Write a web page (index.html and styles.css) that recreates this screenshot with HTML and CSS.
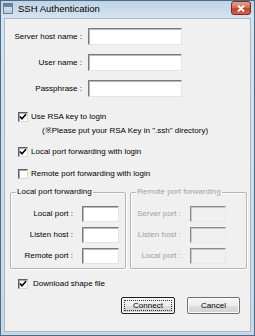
FILE: index.html
```html
<!DOCTYPE html>
<html>
<head>
<meta charset="utf-8">
<link rel="stylesheet" href="styles.css">
</head>
<body>
<div class="window">
  <div class="titlebar">
    <span class="app-icon"><span class="app-icon-bar"></span></span>
    <span class="title">SSH Authentication</span>
    <span class="close">
      <svg width="8" height="7" viewBox="0 0 8 7"><path d="M1 0.5 L7 6.5 M7 0.5 L1 6.5" stroke="#fff" stroke-width="1.8"/></svg>
    </span>
  </div>
  <div class="client">
    <div class="form">
      <span class="label">Server host name :</span><span class="input"></span>
      <span class="label">User name :</span><span class="input"></span>
      <span class="label">Passphrase :</span><span class="input"></span>
    </div>

    <div class="check-row rsa">
      <span class="cb"><svg width="8" height="8" viewBox="0 0 8 8"><path d="M1 3.5 L3 5.8 L7 1.2" fill="none" stroke="#000" stroke-width="1.6"/></svg></span>
      <span>Use RSA key to login</span>
    </div>
    <div class="note">(※Please put your RSA Key in ".ssh" directory)</div>
    <div class="check-row local">
      <span class="cb"><svg width="8" height="8" viewBox="0 0 8 8"><path d="M1 3.5 L3 5.8 L7 1.2" fill="none" stroke="#000" stroke-width="1.6"/></svg></span>
      <span>Local port forwarding with login</span>
    </div>
    <div class="check-row remote">
      <span class="cb"></span>
      <span>Remote port forwarding with login</span>
    </div>

    <div class="groups">
      <fieldset class="group group-local">
        <legend>Local port forwarding</legend>
        <div class="group-form">
          <span class="label">Local port :</span><span class="input small"></span>
          <span class="label">Listen host :</span><span class="input small"></span>
          <span class="label">Remote port :</span><span class="input small"></span>
        </div>
      </fieldset>
      <fieldset class="group group-remote disabled">
        <legend>Remote port forwarding</legend>
        <div class="group-form">
          <span class="label">Server port :</span><span class="input small"></span>
          <span class="label">Listen host :</span><span class="input small"></span>
          <span class="label">Local port :</span><span class="input small"></span>
        </div>
      </fieldset>
    </div>

    <div class="check-row download">
      <span class="cb"><svg width="8" height="8" viewBox="0 0 8 8"><path d="M1 3.5 L3 5.8 L7 1.2" fill="none" stroke="#000" stroke-width="1.6"/></svg></span>
      <span>Download shape file</span>
    </div>

    <div class="buttons">
      <span class="btn default"><span class="focus">Connect</span></span>
      <span class="btn">Cancel</span>
    </div>
  </div>
</div>
</body>
</html>
```

FILE: styles.css
```css
* { box-sizing: border-box; }
html, body { margin: 0; padding: 0; }
body {
  width: 255px;
  height: 336px;
  font-family: "Liberation Sans", Arial, sans-serif;
  font-size: 8px;
  color: #000;
  background: #c9d9ea;
}
.window {
  width: 255px;
  height: 336px;
  border: 1px solid #4d6c80;
  background: linear-gradient(to bottom, #bfd2e7 0px, #d6e3f1 17px, #c8d8ea 100%);
  display: flex;
  flex-direction: column;
}
.titlebar {
  height: 17px;
  display: flex;
  align-items: flex-start;
  padding-left: 2px;
  padding-right: 3px;
  flex-shrink: 0;
}
.app-icon {
  width: 10px;
  height: 11px;
  margin-top: 2px;
  border: 1px solid #6d7f8f;
  background: linear-gradient(to bottom, #e8eef4, #b8c6d4);
  display: flex;
  flex-direction: column;
}
.app-icon-bar {
  height: 3px;
  background: #5a86b4;
}
.title {
  margin-left: 5px;
  margin-top: 2px;
  font-size: 9.5px;
  line-height: 12px;
  color: #000;
}
.close {
  margin-left: auto;
  width: 20px;
  height: 14px;
  border: 1px solid #7a2b1f;
  border-radius: 3px;
  background: linear-gradient(to bottom, #e3a293 0%, #d0705c 45%, #c0452c 55%, #d3644a 100%);
  display: flex;
  align-items: center;
  justify-content: center;
}
.client {
  flex: 1;
  margin: 0 3px 3px 3px;
  background: #f0f0f0;
  border: 1px solid #a7b8c8;
  padding-top: 9px;
  display: flex;
  flex-direction: column;
}
.form {
  display: grid;
  grid-template-columns: 77px 94px;
  column-gap: 6px;
  grid-auto-rows: 17px;
  row-gap: 9px;
  align-items: center;
}
.label {
  text-align: right;
  line-height: 10px;
  white-space: nowrap;
}
.input {
  height: 17px;
  background: #fff;
  border-style: solid;
  border-width: 1px;
  border-color: #7a7a7a #e4e4e4 #e4e4e4 #7a7a7a;
  box-shadow: inset 1px 1px 0 #b9b9b9;
}
.input.small {
  height: 16px;
}
.check-row {
  display: flex;
  align-items: center;
  height: 12px;
  padding-left: 13px;
  gap: 3px;
  line-height: 10px;
  white-space: nowrap;
}
.cb {
  width: 10px;
  height: 10px;
  background: #fff;
  border-style: solid;
  border-width: 1px;
  border-color: #5e5e5e #d8d8d8 #d8d8d8 #5e5e5e;
  box-shadow: inset 1px 1px 0 #a9a9a9;
  display: flex;
  align-items: center;
  justify-content: center;
  flex-shrink: 0;
}
.rsa { margin-top: 14px; }
.note {
  margin-top: 2px;
  height: 12px;
  line-height: 12px;
  padding-left: 37px;
  white-space: nowrap;
}
.local { margin-top: 9px; }
.remote { margin-top: 10px; }
.groups {
  display: flex;
  gap: 4px;
  margin-top: 7px;
  padding-left: 5px;
}
.group {
  margin: 0;
  padding: 0 0 4px 0;
  border: 1px solid #b5b5b5;
  border-radius: 2px;
  box-shadow: inset 1px 1px 0 #fff, 1px 1px 0 #fff;
}
.group legend {
  margin-left: 5px;
  padding: 0 1px;
  line-height: 10px;
  font-size: 8px;
  white-space: nowrap;
}
.group-local { width: 116px; }
.group-remote { width: 117px; }
.group-form {
  display: grid;
  grid-auto-rows: 16px;
  row-gap: 5px;
  column-gap: 9px;
  align-items: center;
  padding-top: 9px;
}
.group-local .group-form { grid-template-columns: 62px 37px; }
.group-remote .group-form { grid-template-columns: 50px 36px; }
.disabled { color: #a0a0a0; }
.disabled .input {
  background: #f0f0f0;
  border-color: #8a8a8a #e8e8e8 #e8e8e8 #8a8a8a;
  box-shadow: inset 1px 1px 0 #c8c8c8;
}
.download { margin-top: 9px; gap: 5px; }
.buttons {
  display: flex;
  justify-content: flex-end;
  gap: 12px;
  padding-right: 10px;
  margin-top: 7px;
}
.btn {
  width: 53px;
  height: 17px;
  border: 1px solid #707070;
  border-radius: 2px;
  background: linear-gradient(to bottom, #f6f6f6 0%, #ececec 50%, #dedede 51%, #d2d2d2 100%);
  box-shadow: inset 0 0 0 1px #fbfbfb;
  display: flex;
  align-items: center;
  justify-content: center;
  line-height: 10px;
}
.btn.default {
  width: 54px;
  border-color: #202020;
  padding: 2px;
}
.focus {
  flex: 1;
  align-self: stretch;
  border: 1px dotted #333;
  display: flex;
  align-items: center;
  justify-content: center;
}
```
